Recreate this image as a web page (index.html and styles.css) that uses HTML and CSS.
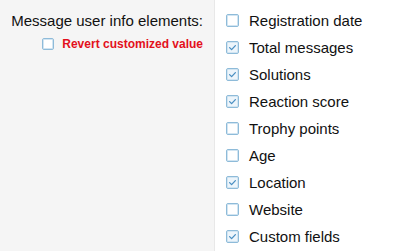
FILE: index.html
```html
<!DOCTYPE html>
<html>
<head>
<meta charset="utf-8">
<link rel="stylesheet" href="styles.css">
</head>
<body>
<div class="row">
  <div class="label-col">
    <div class="label">Message user info elements:</div>
    <div class="revert">
      <span class="box small"></span>
      <span class="revert-text">Revert customized value</span>
    </div>
  </div>
  <ul class="options">
    <li><span class="box"></span>Registration date</li>
    <li><span class="box checked"><svg viewBox="0 0 11 11"><path d="M2.6 5.6 L4.6 7.6 L8.4 3.6"/></svg></span>Total messages</li>
    <li><span class="box checked"><svg viewBox="0 0 11 11"><path d="M2.6 5.6 L4.6 7.6 L8.4 3.6"/></svg></span>Solutions</li>
    <li><span class="box checked"><svg viewBox="0 0 11 11"><path d="M2.6 5.6 L4.6 7.6 L8.4 3.6"/></svg></span>Reaction score</li>
    <li><span class="box"></span>Trophy points</li>
    <li><span class="box"></span>Age</li>
    <li><span class="box checked"><svg viewBox="0 0 11 11"><path d="M2.6 5.6 L4.6 7.6 L8.4 3.6"/></svg></span>Location</li>
    <li><span class="box"></span>Website</li>
    <li><span class="box checked"><svg viewBox="0 0 11 11"><path d="M2.6 5.6 L4.6 7.6 L8.4 3.6"/></svg></span>Custom fields</li>
  </ul>
</div>
</body>
</html>
```

FILE: styles.css
```css
html, body {
  margin: 0;
  padding: 0;
  background: #ffffff;
  font-family: "Liberation Sans", Arial, sans-serif;
  color: #111111;
}
.row {
  display: flex;
  height: 251px;
}
.label-col {
  width: 203px;
  flex: none;
  background: #f5f5f5;
  border-right: 1px solid #e8e8e8;
  padding: 7px 11px 0 0;
  display: flex;
  flex-direction: column;
  align-items: flex-end;
}
.label {
  font-size: 15px;
  line-height: 27px;
}
.revert {
  display: flex;
  align-items: center;
  gap: 8px;
  height: 20px;
}
.revert-text {
  color: #e3101c;
  font-weight: bold;
  font-size: 12px;
}
.options {
  list-style: none;
  margin: 0;
  padding: 7px 0 0 11px;
  flex: 1;
}
.options li {
  display: flex;
  align-items: center;
  height: 27px;
  font-size: 15px;
  gap: 10px;
}
.box {
  width: 11px;
  height: 11px;
  border: 1px solid #8ebbd9;
  box-shadow: inset 0 0 0 1px #d2e5f2;
  border-radius: 2px;
  background: #fff;
  flex: none;
  display: inline-flex;
  box-sizing: content-box;
}
.box.small {
  width: 10px;
  height: 10px;
}
.box.checked {
  background: #edf5fb;
}
.box svg {
  width: 11px;
  height: 11px;
}
.box svg path {
  fill: none;
  stroke: #4a8fc2;
  stroke-width: 1.3;
  stroke-linecap: round;
  stroke-linejoin: round;
}
```
